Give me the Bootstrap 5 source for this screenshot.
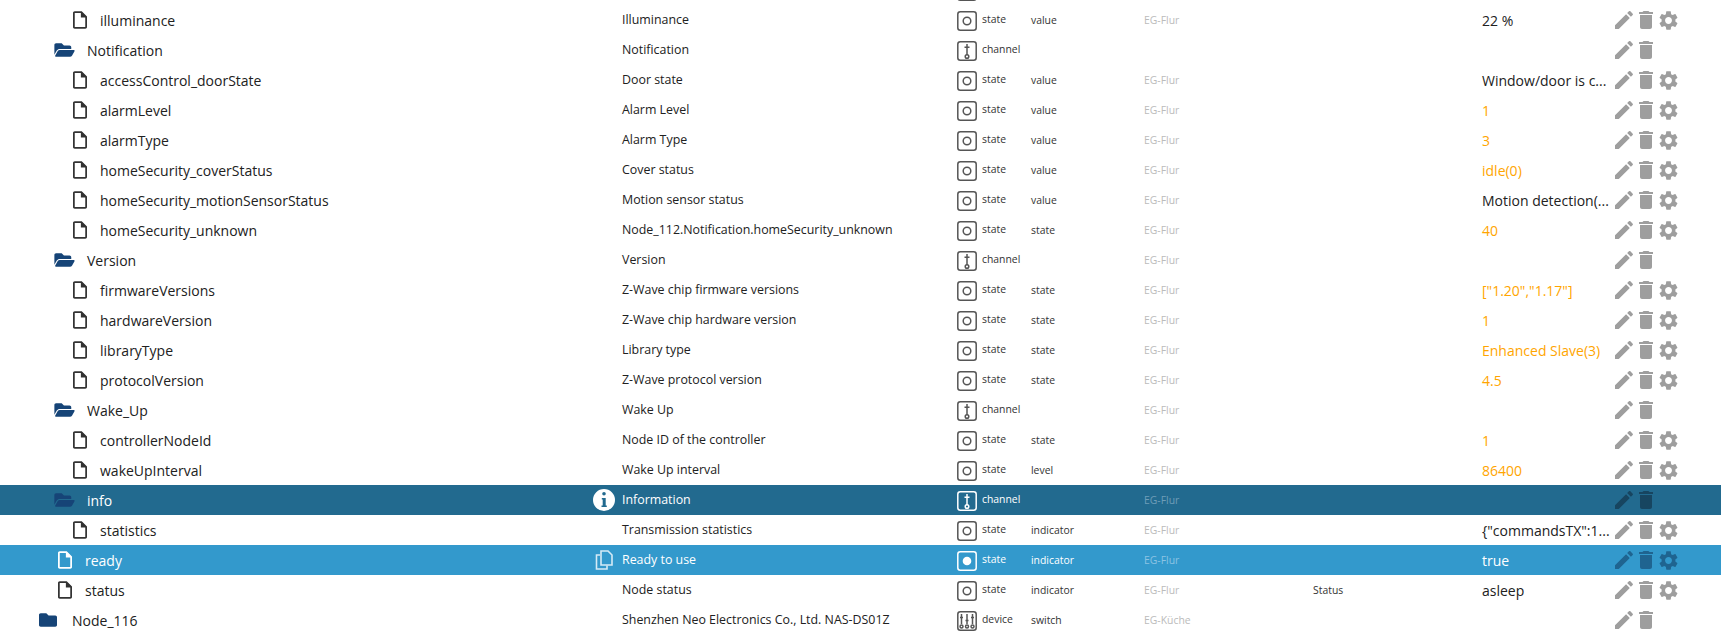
<!DOCTYPE html>
<html lang="en">
<head>
<meta charset="utf-8">
<title>Objects</title>
<link rel="stylesheet" href="https://cdn.jsdelivr.net/npm/bootstrap@5.3.0/dist/css/bootstrap.min.css">
<style>
html,body{overflow:hidden;height:632px;background:#fff}
body{font-family:"Open Sans","Noto Sans",sans-serif;color:#212121}
.obj-list{margin-top:-25px}
.obj-row{grid-template-columns:593px 29px 335px 74px 113px 169px 169px 133px 106px;height:30px;white-space:nowrap}
.obj-name{font-size:14px;display:flex;align-items:center}
.lv2{padding-left:38px}.lv3{padding-left:53px}.lv3f{padding-left:58px}.lv4{padding-left:73px}
.ic-file{width:14px;height:18px;margin-right:13px;fill:#333;flex:none}
.ic-open{width:23px;height:18px;margin-right:11px;fill:#164477;flex:none}
.ic-closed{width:20px;height:18px;margin-right:14px;fill:#164477;flex:none}
.obj-desc{font-size:12.4px;padding-top:1px}
.obj-type{font-size:10.4px;display:flex;align-items:center;gap:5px;color:#333}
.ic-type{width:20px;height:20px;flex:none;fill:none;stroke:#555;stroke-width:1.5;margin-top:1px}
.obj-role{font-size:10.4px;color:#333;padding-top:1px}
.obj-room{font-size:10.4px;color:#bbb;padding-top:1px}
.obj-func{font-size:10.4px;color:#333;padding-top:1px}
.obj-val{font-size:14px;padding-top:1px}
.val-o{color:#ffa500}
.obj-acts{display:flex;align-items:center}
.ic-act{width:24px;height:24px;fill:#9e9e9e;flex:none;margin-right:-3px}
.ic-act.e{margin-left:-3px}
.ic-act.t{margin-left:1px;margin-right:0}
.ic-act.g{margin-left:-1px;width:23px;height:23px}
.row-info{background:#226a8f;color:#fff}
.row-ready{background:#3399cc;color:#fff}
.row-info .obj-type,.row-info .obj-role,.row-ready .obj-type,.row-ready .obj-role{color:#fff}
.row-info .ic-type,.row-ready .ic-type{stroke:#fff}
.row-info .obj-room{color:#6f9db8}
.row-ready .obj-room{color:#8cc3e3}
.row-info .ic-act{fill:#174560}
.row-ready .ic-act{fill:#1f6490}
.row-ready .ic-file{fill:#fff}
.ic-info{width:22px;height:22px;fill:#fff}
.ic-copy{width:18px;height:20px;fill:none;stroke:#d5eaf6;stroke-width:1.6;margin-left:2px}
</style>
</head>
<body>
<svg width="0" height="0" class="position-absolute">
<symbol id="s-file" viewBox="4 2 16 20"><path d="M14 2H6c-1.1 0-2 .9-2 2v16c0 1.1.9 2 2 2h12c1.1 0 2-.9 2-2V8l-6-6zM6 20V4h7v5h5v11H6z"/><path d="M14 3l5 5h-5z"/></symbol>
<symbol id="s-open" viewBox="0 0 576 512"><path d="M572.694 292.093L500.27 416.248A63.997 63.997 0 0 1 444.989 448H45.025c-18.523 0-30.064-20.093-20.731-36.093l72.424-124.155A64 64 0 0 1 152 256h399.964c18.523 0 30.064 20.093 20.73 36.093zM152 224h328v-48c0-26.51-21.49-48-48-48H272l-64-64H48C21.49 64 0 85.49 0 112v278.046l69.077-118.418C86.214 242.25 117.989 224 152 224z"/></symbol>
<symbol id="s-closed" viewBox="0 0 512 512"><path d="M464 128H272l-64-64H48C21.49 64 0 85.49 0 112v288c0 26.51 21.49 48 48 48h416c26.51 0 48-21.49 48-48V176c0-26.51-21.49-48-48-48z"/></symbol>
<symbol id="s-edit" viewBox="0 0 24 24"><path d="M3 17.25V21h3.75L17.81 9.94l-3.75-3.75L3 17.25zM20.71 7.04c.39-.39.39-1.02 0-1.41l-2.34-2.34c-.39-.39-1.02-.39-1.41 0l-1.83 1.83 3.75 3.75 1.83-1.83z"/></symbol>
<symbol id="s-trash" viewBox="0 0 24 24"><path d="M6 19c0 1.1.9 2 2 2h8c1.1 0 2-.9 2-2V7H6v12zM19 4h-3.5l-1-1h-5l-1 1H5v2h14V4z"/></symbol>
<symbol id="s-gear" viewBox="0 0 24 24"><path d="M19.14 12.94c.04-.3.06-.61.06-.94 0-.32-.02-.64-.07-.94l2.03-1.58c.18-.14.23-.41.12-.61l-1.92-3.32c-.12-.22-.37-.29-.59-.22l-2.39.96c-.5-.38-1.03-.7-1.62-.94l-.36-2.54c-.04-.24-.24-.41-.48-.41h-3.84c-.24 0-.43.17-.47.41l-.36 2.54c-.59.24-1.13.57-1.62.94l-2.39-.96c-.22-.08-.47 0-.59.22L2.74 8.87c-.12.21-.08.47.12.61l2.03 1.58c-.05.3-.09.63-.09.94s.02.64.07.94l-2.03 1.58c-.18.14-.23.41-.12.61l1.92 3.32c.12.22.37.29.59.22l2.39-.96c.5.38 1.03.7 1.62.94l.36 2.54c.05.24.24.41.48.41h3.84c.24 0 .44-.17.47-.41l.36-2.54c.59-.24 1.13-.56 1.62-.94l2.39.96c.22.08.47 0 .59-.22l1.92-3.32c.12-.22.07-.47-.12-.61l-2.01-1.58zM12 15.6c-1.98 0-3.6-1.62-3.6-3.6s1.62-3.6 3.6-3.6 3.6 1.62 3.6 3.6-1.62 3.6-3.6 3.6z"/></symbol>
<symbol id="s-state" viewBox="0 0 20 20"><rect x=".8" y=".8" width="18.4" height="18.4" rx="2.5"/><circle cx="10" cy="10" r="3.8"/></symbol>
<symbol id="s-stateon" viewBox="0 0 20 20"><rect x=".8" y=".8" width="18.4" height="18.4" rx="2.5"/><circle cx="10" cy="10" r="4.3" style="fill:#fff;stroke:none"/></symbol>
<symbol id="s-chan" viewBox="0 0 20 20"><rect x=".8" y=".8" width="18.4" height="18.4" rx="2.5"/><path d="M10 3v11M7.500 6.300h5" /><circle cx="10" cy="15.500" r="1.800"/></symbol>
<symbol id="s-dev" viewBox="0 0 20 20"><rect x=".8" y=".8" width="18.4" height="18.4" rx="2.500"/><path d="M4.500 3v10M10 3v10M15.500 3v10M3 6.500h3M8.500 9.500h3M14 6.500h3"/><circle cx="4.500" cy="15.500" r="1.500"/><circle cx="10" cy="15.500" r="1.500"/><circle cx="15.500" cy="15.500" r="1.500"/></symbol>
</svg>

<main class="obj-list">
<div class="d-grid obj-row align-items-center"><div></div><div></div><div></div><div class="obj-type"><svg class="ic-type"><use href="#s-state"/></svg></div></div>

<div class="d-grid obj-row align-items-center"><div class="obj-name lv4"><svg class="ic-file"><use href="#s-file"/></svg>illuminance</div><div></div><div class="obj-desc">Illuminance</div><div class="obj-type"><svg class="ic-type"><use href="#s-state"/></svg>state</div><div class="obj-role">value</div><div class="obj-room">EG-Flur</div><div class="obj-func"></div><div class="obj-val">22 %</div><div class="obj-acts"><svg class="ic-act e"><use href="#s-edit"/></svg><svg class="ic-act t"><use href="#s-trash"/></svg><svg class="ic-act g"><use href="#s-gear"/></svg></div></div>

<div class="d-grid obj-row align-items-center"><div class="obj-name lv3"><svg class="ic-open"><use href="#s-open"/></svg>Notification</div><div></div><div class="obj-desc">Notification</div><div class="obj-type"><svg class="ic-type"><use href="#s-chan"/></svg>channel</div><div class="obj-role"></div><div class="obj-room"></div><div class="obj-func"></div><div class="obj-val"></div><div class="obj-acts"><svg class="ic-act e"><use href="#s-edit"/></svg><svg class="ic-act t"><use href="#s-trash"/></svg></div></div>

<div class="d-grid obj-row align-items-center"><div class="obj-name lv4"><svg class="ic-file"><use href="#s-file"/></svg>accessControl_doorState</div><div></div><div class="obj-desc">Door state</div><div class="obj-type"><svg class="ic-type"><use href="#s-state"/></svg>state</div><div class="obj-role">value</div><div class="obj-room">EG-Flur</div><div class="obj-func"></div><div class="obj-val">Window/door is c...</div><div class="obj-acts"><svg class="ic-act e"><use href="#s-edit"/></svg><svg class="ic-act t"><use href="#s-trash"/></svg><svg class="ic-act g"><use href="#s-gear"/></svg></div></div>

<div class="d-grid obj-row align-items-center"><div class="obj-name lv4"><svg class="ic-file"><use href="#s-file"/></svg>alarmLevel</div><div></div><div class="obj-desc">Alarm Level</div><div class="obj-type"><svg class="ic-type"><use href="#s-state"/></svg>state</div><div class="obj-role">value</div><div class="obj-room">EG-Flur</div><div class="obj-func"></div><div class="obj-val val-o">1</div><div class="obj-acts"><svg class="ic-act e"><use href="#s-edit"/></svg><svg class="ic-act t"><use href="#s-trash"/></svg><svg class="ic-act g"><use href="#s-gear"/></svg></div></div>

<div class="d-grid obj-row align-items-center"><div class="obj-name lv4"><svg class="ic-file"><use href="#s-file"/></svg>alarmType</div><div></div><div class="obj-desc">Alarm Type</div><div class="obj-type"><svg class="ic-type"><use href="#s-state"/></svg>state</div><div class="obj-role">value</div><div class="obj-room">EG-Flur</div><div class="obj-func"></div><div class="obj-val val-o">3</div><div class="obj-acts"><svg class="ic-act e"><use href="#s-edit"/></svg><svg class="ic-act t"><use href="#s-trash"/></svg><svg class="ic-act g"><use href="#s-gear"/></svg></div></div>

<div class="d-grid obj-row align-items-center"><div class="obj-name lv4"><svg class="ic-file"><use href="#s-file"/></svg>homeSecurity_coverStatus</div><div></div><div class="obj-desc">Cover status</div><div class="obj-type"><svg class="ic-type"><use href="#s-state"/></svg>state</div><div class="obj-role">value</div><div class="obj-room">EG-Flur</div><div class="obj-func"></div><div class="obj-val val-o">idle(0)</div><div class="obj-acts"><svg class="ic-act e"><use href="#s-edit"/></svg><svg class="ic-act t"><use href="#s-trash"/></svg><svg class="ic-act g"><use href="#s-gear"/></svg></div></div>

<div class="d-grid obj-row align-items-center"><div class="obj-name lv4"><svg class="ic-file"><use href="#s-file"/></svg>homeSecurity_motionSensorStatus</div><div></div><div class="obj-desc">Motion sensor status</div><div class="obj-type"><svg class="ic-type"><use href="#s-state"/></svg>state</div><div class="obj-role">value</div><div class="obj-room">EG-Flur</div><div class="obj-func"></div><div class="obj-val">Motion detection(...</div><div class="obj-acts"><svg class="ic-act e"><use href="#s-edit"/></svg><svg class="ic-act t"><use href="#s-trash"/></svg><svg class="ic-act g"><use href="#s-gear"/></svg></div></div>

<div class="d-grid obj-row align-items-center"><div class="obj-name lv4"><svg class="ic-file"><use href="#s-file"/></svg>homeSecurity_unknown</div><div></div><div class="obj-desc">Node_112.Notification.homeSecurity_unknown</div><div class="obj-type"><svg class="ic-type"><use href="#s-state"/></svg>state</div><div class="obj-role">state</div><div class="obj-room">EG-Flur</div><div class="obj-func"></div><div class="obj-val val-o">40</div><div class="obj-acts"><svg class="ic-act e"><use href="#s-edit"/></svg><svg class="ic-act t"><use href="#s-trash"/></svg><svg class="ic-act g"><use href="#s-gear"/></svg></div></div>

<div class="d-grid obj-row align-items-center"><div class="obj-name lv3"><svg class="ic-open"><use href="#s-open"/></svg>Version</div><div></div><div class="obj-desc">Version</div><div class="obj-type"><svg class="ic-type"><use href="#s-chan"/></svg>channel</div><div class="obj-role"></div><div class="obj-room">EG-Flur</div><div class="obj-func"></div><div class="obj-val"></div><div class="obj-acts"><svg class="ic-act e"><use href="#s-edit"/></svg><svg class="ic-act t"><use href="#s-trash"/></svg></div></div>

<div class="d-grid obj-row align-items-center"><div class="obj-name lv4"><svg class="ic-file"><use href="#s-file"/></svg>firmwareVersions</div><div></div><div class="obj-desc">Z-Wave chip firmware versions</div><div class="obj-type"><svg class="ic-type"><use href="#s-state"/></svg>state</div><div class="obj-role">state</div><div class="obj-room">EG-Flur</div><div class="obj-func"></div><div class="obj-val val-o">["1.20","1.17"]</div><div class="obj-acts"><svg class="ic-act e"><use href="#s-edit"/></svg><svg class="ic-act t"><use href="#s-trash"/></svg><svg class="ic-act g"><use href="#s-gear"/></svg></div></div>

<div class="d-grid obj-row align-items-center"><div class="obj-name lv4"><svg class="ic-file"><use href="#s-file"/></svg>hardwareVersion</div><div></div><div class="obj-desc">Z-Wave chip hardware version</div><div class="obj-type"><svg class="ic-type"><use href="#s-state"/></svg>state</div><div class="obj-role">state</div><div class="obj-room">EG-Flur</div><div class="obj-func"></div><div class="obj-val val-o">1</div><div class="obj-acts"><svg class="ic-act e"><use href="#s-edit"/></svg><svg class="ic-act t"><use href="#s-trash"/></svg><svg class="ic-act g"><use href="#s-gear"/></svg></div></div>

<div class="d-grid obj-row align-items-center"><div class="obj-name lv4"><svg class="ic-file"><use href="#s-file"/></svg>libraryType</div><div></div><div class="obj-desc">Library type</div><div class="obj-type"><svg class="ic-type"><use href="#s-state"/></svg>state</div><div class="obj-role">state</div><div class="obj-room">EG-Flur</div><div class="obj-func"></div><div class="obj-val val-o">Enhanced Slave(3)</div><div class="obj-acts"><svg class="ic-act e"><use href="#s-edit"/></svg><svg class="ic-act t"><use href="#s-trash"/></svg><svg class="ic-act g"><use href="#s-gear"/></svg></div></div>

<div class="d-grid obj-row align-items-center"><div class="obj-name lv4"><svg class="ic-file"><use href="#s-file"/></svg>protocolVersion</div><div></div><div class="obj-desc">Z-Wave protocol version</div><div class="obj-type"><svg class="ic-type"><use href="#s-state"/></svg>state</div><div class="obj-role">state</div><div class="obj-room">EG-Flur</div><div class="obj-func"></div><div class="obj-val val-o">4.5</div><div class="obj-acts"><svg class="ic-act e"><use href="#s-edit"/></svg><svg class="ic-act t"><use href="#s-trash"/></svg><svg class="ic-act g"><use href="#s-gear"/></svg></div></div>

<div class="d-grid obj-row align-items-center"><div class="obj-name lv3"><svg class="ic-open"><use href="#s-open"/></svg>Wake_Up</div><div></div><div class="obj-desc">Wake Up</div><div class="obj-type"><svg class="ic-type"><use href="#s-chan"/></svg>channel</div><div class="obj-role"></div><div class="obj-room">EG-Flur</div><div class="obj-func"></div><div class="obj-val"></div><div class="obj-acts"><svg class="ic-act e"><use href="#s-edit"/></svg><svg class="ic-act t"><use href="#s-trash"/></svg></div></div>

<div class="d-grid obj-row align-items-center"><div class="obj-name lv4"><svg class="ic-file"><use href="#s-file"/></svg>controllerNodeId</div><div></div><div class="obj-desc">Node ID of the controller</div><div class="obj-type"><svg class="ic-type"><use href="#s-state"/></svg>state</div><div class="obj-role">state</div><div class="obj-room">EG-Flur</div><div class="obj-func"></div><div class="obj-val val-o">1</div><div class="obj-acts"><svg class="ic-act e"><use href="#s-edit"/></svg><svg class="ic-act t"><use href="#s-trash"/></svg><svg class="ic-act g"><use href="#s-gear"/></svg></div></div>

<div class="d-grid obj-row align-items-center"><div class="obj-name lv4"><svg class="ic-file"><use href="#s-file"/></svg>wakeUpInterval</div><div></div><div class="obj-desc">Wake Up interval</div><div class="obj-type"><svg class="ic-type"><use href="#s-state"/></svg>state</div><div class="obj-role">level</div><div class="obj-room">EG-Flur</div><div class="obj-func"></div><div class="obj-val val-o">86400</div><div class="obj-acts"><svg class="ic-act e"><use href="#s-edit"/></svg><svg class="ic-act t"><use href="#s-trash"/></svg><svg class="ic-act g"><use href="#s-gear"/></svg></div></div>

<div class="d-grid obj-row align-items-center row-info"><div class="obj-name lv3"><svg class="ic-open"><use href="#s-open"/></svg>info</div><div><svg class="ic-info d-block" viewBox="0 0 22 22"><path fill-rule="evenodd" d="M11 0a11 11 0 1 0 0 22a11 11 0 0 0 0-22zM9.200 4.800a1.800 1.800 0 1 1 3.600 0a1.800 1.800 0 0 1-3.600 0zM8.800 9h3.900v7.500h1.100V18H8.500v-1.500h1.200V10.500H8.800z"/></svg></div><div class="obj-desc">Information</div><div class="obj-type"><svg class="ic-type"><use href="#s-chan"/></svg>channel</div><div class="obj-role"></div><div class="obj-room">EG-Flur</div><div class="obj-func"></div><div class="obj-val"></div><div class="obj-acts"><svg class="ic-act e"><use href="#s-edit"/></svg><svg class="ic-act t"><use href="#s-trash"/></svg></div></div>

<div class="d-grid obj-row align-items-center"><div class="obj-name lv4"><svg class="ic-file"><use href="#s-file"/></svg>statistics</div><div></div><div class="obj-desc">Transmission statistics</div><div class="obj-type"><svg class="ic-type"><use href="#s-state"/></svg>state</div><div class="obj-role">indicator</div><div class="obj-room">EG-Flur</div><div class="obj-func"></div><div class="obj-val">{"commandsTX":1...</div><div class="obj-acts"><svg class="ic-act e"><use href="#s-edit"/></svg><svg class="ic-act t"><use href="#s-trash"/></svg><svg class="ic-act g"><use href="#s-gear"/></svg></div></div>

<div class="d-grid obj-row align-items-center row-ready"><div class="obj-name lv3f"><svg class="ic-file"><use href="#s-file"/></svg>ready</div><div><svg class="ic-copy d-block" viewBox="0 0 18 20"><path d="M6 1h7l4 4v10H6z"/><path d="M5 5H1.500v14H12v-3.500"/></svg></div><div class="obj-desc">Ready to use</div><div class="obj-type"><svg class="ic-type"><use href="#s-stateon"/></svg>state</div><div class="obj-role">indicator</div><div class="obj-room">EG-Flur</div><div class="obj-func"></div><div class="obj-val">true</div><div class="obj-acts"><svg class="ic-act e"><use href="#s-edit"/></svg><svg class="ic-act t"><use href="#s-trash"/></svg><svg class="ic-act g"><use href="#s-gear"/></svg></div></div>

<div class="d-grid obj-row align-items-center"><div class="obj-name lv3f"><svg class="ic-file"><use href="#s-file"/></svg>status</div><div></div><div class="obj-desc">Node status</div><div class="obj-type"><svg class="ic-type"><use href="#s-state"/></svg>state</div><div class="obj-role">indicator</div><div class="obj-room">EG-Flur</div><div class="obj-func">Status</div><div class="obj-val">asleep</div><div class="obj-acts"><svg class="ic-act e"><use href="#s-edit"/></svg><svg class="ic-act t"><use href="#s-trash"/></svg><svg class="ic-act g"><use href="#s-gear"/></svg></div></div>

<div class="d-grid obj-row align-items-center"><div class="obj-name lv2"><svg class="ic-closed"><use href="#s-closed"/></svg>Node_116</div><div></div><div class="obj-desc">Shenzhen Neo Electronics Co., Ltd. NAS-DS01Z</div><div class="obj-type"><svg class="ic-type"><use href="#s-dev"/></svg>device</div><div class="obj-role">switch</div><div class="obj-room">EG-Küche</div><div class="obj-func"></div><div class="obj-val"></div><div class="obj-acts"><svg class="ic-act e"><use href="#s-edit"/></svg><svg class="ic-act t"><use href="#s-trash"/></svg></div></div>
</main>
<script src="https://cdn.jsdelivr.net/npm/bootstrap@5.3.0/dist/js/bootstrap.bundle.min.js"></script>
</body>
</html>
